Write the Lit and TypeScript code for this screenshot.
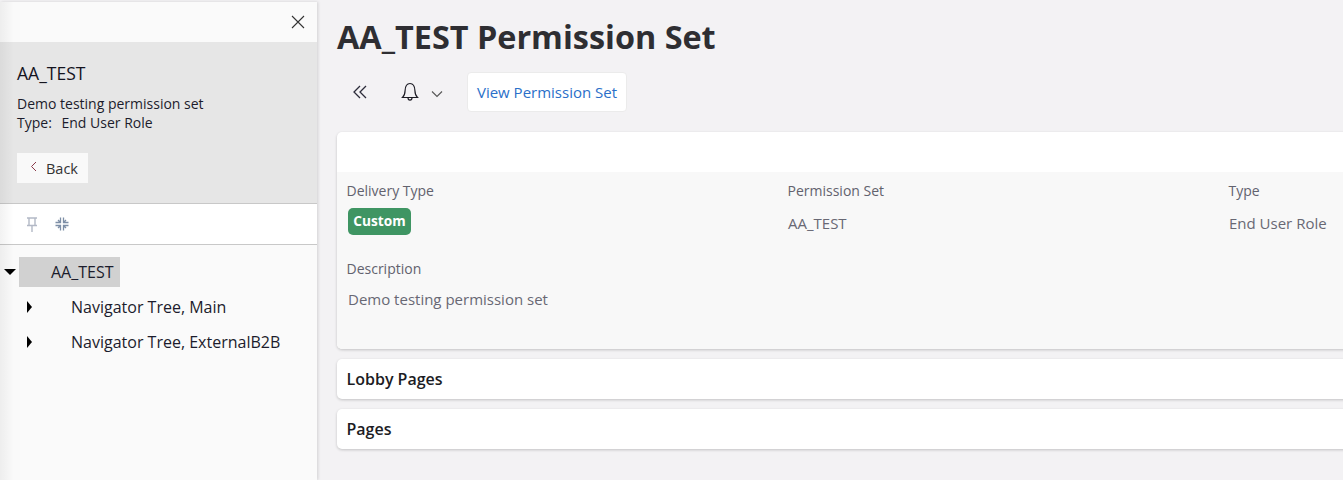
import { LitElement, html, css } from "lit";
import { customElement } from "lit/decorators.js";

@customElement("app-root")
export class AppRoot extends LitElement {
  static styles = css`
    :host { display: block; width: 1343px; height: 480px; overflow: hidden; background: #f3f2f4; font-family: "Open Sans", sans-serif; color: #1f1f2b; }
    .page { display: grid; grid-template-columns: 317px 1fr; height: 480px; }
    .side { position: relative; margin-top: 2px; background: #fafafa; box-shadow: 1px 0 3px rgba(0,0,0,.14); display: flex; flex-direction: column; overflow: hidden; z-index: 1; }
    .side::after { content: ""; position: absolute; left: 0; top: 0; bottom: 0; width: 14px; background: linear-gradient(90deg, rgba(0,0,0,.05), rgba(0,0,0,0)); pointer-events: none; }
    .close { height: 40px; display: flex; justify-content: flex-end; align-items: center; padding-right: 12px; box-sizing: border-box; }
    .info { height: 162px; box-sizing: border-box; background: #e6e6e6; padding: 19px 17px 0; border-bottom: 1px solid #c8c8c8; }
    .info h2 { margin: 0; font-size: 17.5px; font-weight: 400; line-height: 24px; color: #14141e; }
    .info p { margin: 9px 0 0; font-size: 14px; line-height: 19px; color: #1c1c2c; }
    .type-label { margin-right: 6px; }
    .back { margin-top: 21px; width: 71px; height: 30px; background: #f9f9f9; display: flex; align-items: center; box-sizing: border-box; padding-left: 13px; gap: 9px; font-size: 14.5px; color: #333; }
    .back svg { margin-top: -3px; }
    .tools { height: 41px; background: #fff; border-bottom: 1px solid #c8c8c8; box-sizing: border-box; display: flex; align-items: center; padding-left: 26px; gap: 17px; }
    .tree { flex: 1; padding-top: 11px; font-size: 16px; color: #1c1c2c; }
    .node { display: flex; align-items: center; height: 35px; }
    .root { height: 31px; margin-bottom: 2px; }
    .sel { margin-left: 3px; width: 101px; height: 30px; background: #d1d1d1; display: flex; align-items: center; box-sizing: border-box; padding-left: 32px; }
    .t-down { margin-left: 4px; width: 0; height: 0; border-left: 6px solid transparent; border-right: 6px solid transparent; border-top: 6px solid #000; }
    .t-right { margin-left: 27px; margin-right: 39px; width: 0; height: 0; border-top: 6px solid transparent; border-bottom: 6px solid transparent; border-left: 5px solid #000; }
    .main { padding: 0 0 0 20px; min-width: 0; overflow: hidden; }
    h1 { margin: 0; height: 72px; box-sizing: border-box; padding-top: 14px; font-size: 32.4px; line-height: 44px; font-weight: 700; color: #2e2e32; white-space: nowrap; }
    .bar { display: flex; align-items: center; height: 40px; margin-bottom: 20px; }
    .ic1 { margin-left: 15px; width: 16px; height: 16px; }
    .ic2 { margin-left: 33px; width: 18px; height: 20px; }
    .ic3 { margin-left: 12px; margin-right: 24px; width: 12px; height: 8px; margin-top: 4px; }
    .view { height: 40px; box-sizing: border-box; width: 160px; display: flex; align-items: center; justify-content: center; background: #fff; border: 1px solid #ebebeb; border-radius: 4px; color: #2a6fc9; font-size: 15px; }
    .card { width: 1040px; background: #fff; border-radius: 5px 0 0 5px; box-shadow: 0 1px 3px rgba(0,0,0,.2); margin-bottom: 10px; }
    .head { height: 40px; }
    .body { height: 177px; background: #f8f8f8; border-radius: 0 0 0 5px; box-sizing: border-box; padding: 9px 0 0 10px; }
    .row { display: grid; grid-template-columns: 441px 441px 1fr; height: 78px; margin-left: -0.5px; }
    .lbl { font-size: 14px; line-height: 20px; color: #62626e; }
    .val { font-size: 15px; line-height: 20px; color: #686874; margin: 12px 0 0 0.5px; }
    .badge { display: inline-block; margin: 7px 0 0 1.5px; height: 27px; width: 63px; box-sizing: border-box; text-align: center; line-height: 26px; background: #3f9563; color: #fff; border-radius: 5px; font-size: 13.7px; font-weight: 700; }
    .desc { margin-top: 0; margin-left: -0.5px; }
    .desc .val { margin-top: 10px; margin-left: 1.5px; }
    .sec { height: 40px; display: flex; align-items: center; padding-left: 9.500px; font-size: 16px; font-weight: 600; color: #1c1c24; }
  `;

  render() {
    return html`<div class="page">
      <aside class="side">
        <div class="close"><svg width="14" height="14" viewBox="0 0 14 14" fill="none" stroke="#333" stroke-width="1.1"><path d="M1 1l12 12M13 1L1 13"/></svg></div>
        <div class="info">
          <h2>AA_TEST</h2>
          <p>Demo testing permission set<br><span class="type-label">Type:</span> End User Role</p>
          <div class="back"><svg width="7" height="11" viewBox="0 0 7 11" fill="none" stroke="#8a3a4a" stroke-width="1"><path d="M6 1L1.500 5.500 6 10"/></svg>Back</div>
        </div>
        <div class="tools">
          <svg width="12" height="15" viewBox="0 0 12 15" fill="none" stroke="#b3b9c6" stroke-width="1.4"><path d="M1 1h10M3 1v7M9 1v7M1 8.500h10M6 8.500V15"/></svg>
          <svg width="14" height="14" viewBox="0 0 14 14" fill="none" stroke="#7d8ea6" stroke-width="1.3"><path d="M5.500 0.500v5H0.500M8.500 0.500v5H13.500M5.500 13.500v-5H0.500M8.500 13.500v-5H13.500M3 3l2 2M11 3L9 5M3 11l2-2M11 11l-2-2"/></svg>
        </div>
        <div class="tree">
          <div class="node root"><span class="t-down"></span><span class="sel">AA_TEST</span></div>
          <div class="node"><span class="t-right"></span>Navigator Tree, Main</div>
          <div class="node"><span class="t-right"></span>Navigator Tree, ExternalB2B</div>
        </div>
      </aside>
      <main class="main">
        <h1>AA_TEST Permission Set</h1>
        <div class="bar">
          <svg class="ic1" viewBox="0 0 16 16" fill="none" stroke="#2c2c3a" stroke-width="1.3"><path d="M8 2L2 8l6 6M14 2L8 8l6 6"/></svg>
          <svg class="ic2" viewBox="0 0 18 20" fill="none" stroke="#1c1c24" stroke-width="1.2"><path d="M1.500 15.500c1.800-1.600 2.500-3.400 2.600-7C4.300 4 6 1.500 9 1.500s4.700 2.500 4.900 7c.1 3.600.8 5.400 2.600 7z"/><path d="M7 15.800c0 3 4 3 4 0"/></svg>
          <svg class="ic3" viewBox="0 0 12 8" fill="none" stroke="#555" stroke-width="1.1"><path d="M1 1.500l5 5 5-5"/></svg>
          <div class="view">View Permission Set</div>
        </div>
        <section class="card">
          <div class="head"></div>
          <div class="body">
            <div class="row">
              <div><div class="lbl">Delivery Type</div><span class="badge">Custom</span></div>
              <div><div class="lbl">Permission Set</div><div class="val">AA_TEST</div></div>
              <div><div class="lbl">Type</div><div class="val">End User Role</div></div>
            </div>
            <div class="desc"><div class="lbl">Description</div><div class="val">Demo testing permission set</div></div>
          </div>
        </section>
        <section class="card sec">Lobby Pages</section>
        <section class="card sec">Pages</section>
      </main>
    </div>`;
  }
}
